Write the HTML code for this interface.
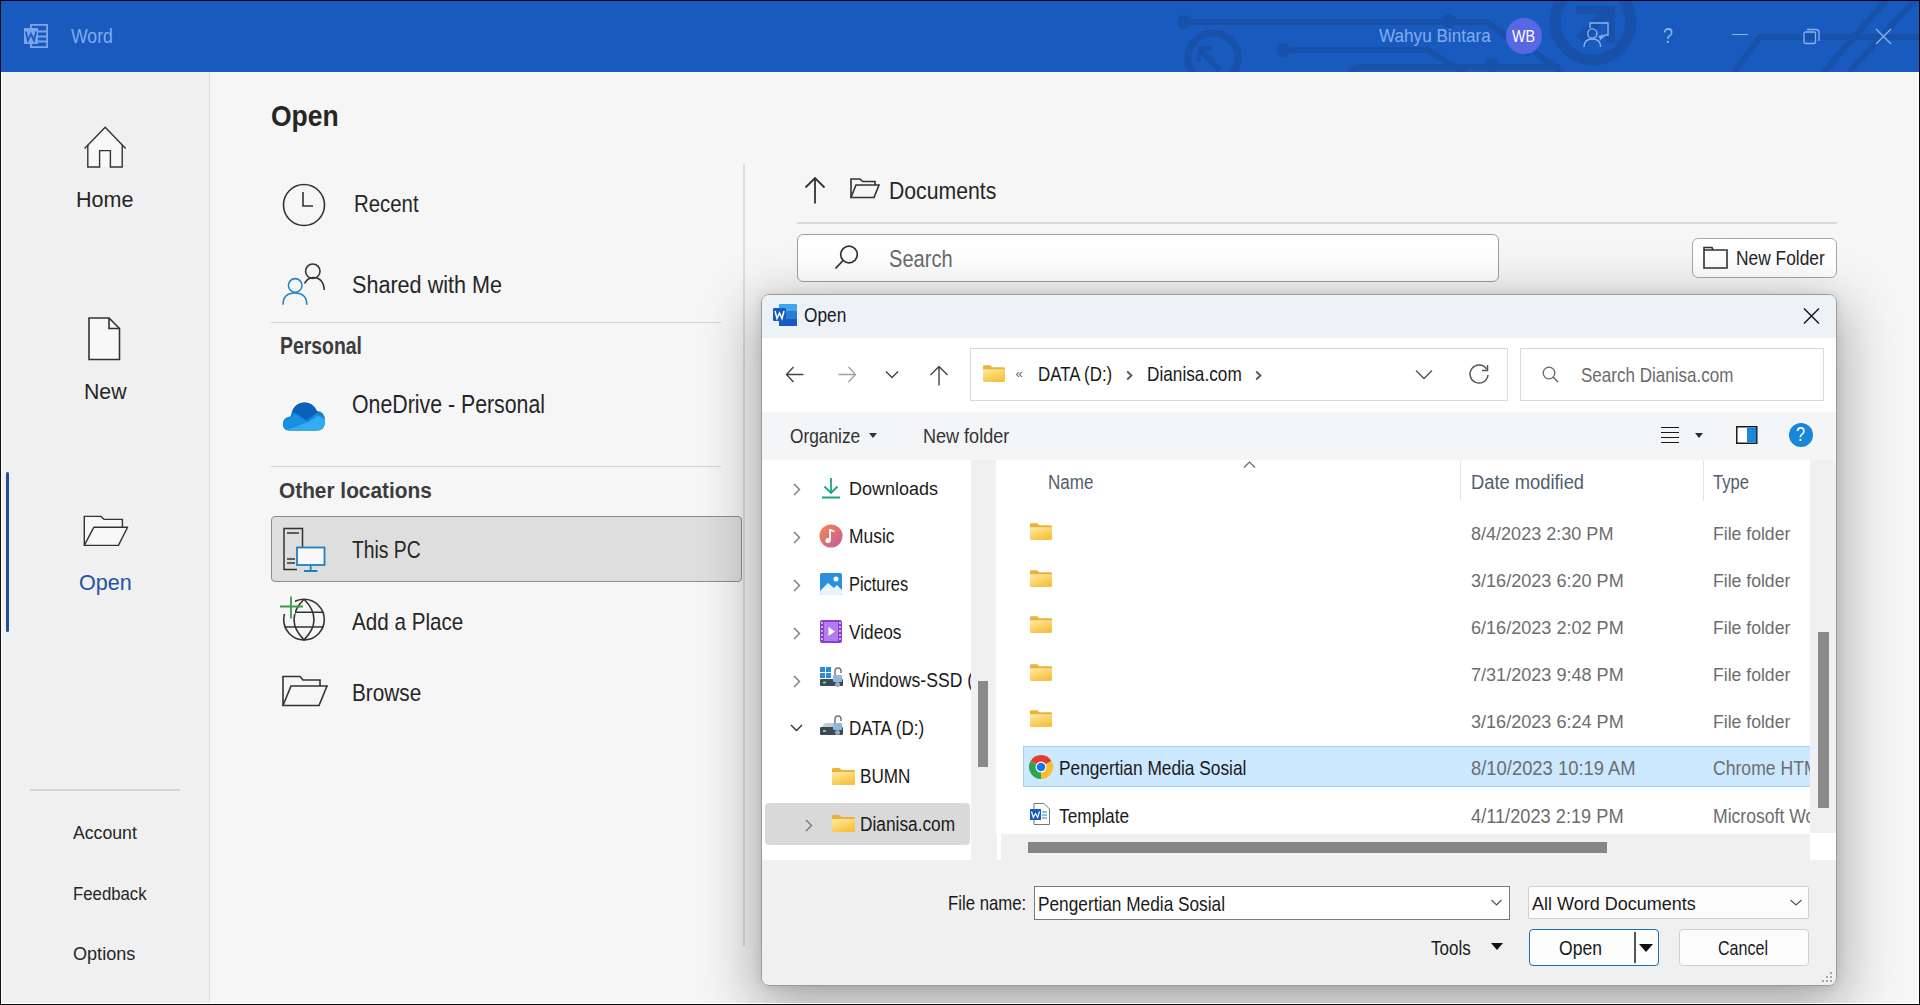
<!DOCTYPE html>
<html><head><meta charset="utf-8">
<style>
*{margin:0;padding:0;box-sizing:border-box}
html,body{width:1920px;height:1005px;overflow:hidden;background:#f6f6f6;font-family:"Liberation Sans",sans-serif;color:#262626;position:relative}
.a{position:absolute}
.t{position:absolute;white-space:nowrap;line-height:1;transform-origin:0 0}
svg.i{position:absolute;overflow:visible}
</style></head><body>
<div class="a" style="left:0;top:0;width:1920px;height:72px;background:#185abd"></div>
<svg class="i" style="left:0;top:0;overflow:hidden" width="1920" height="72" viewBox="0 0 1920 72">
<g fill="none" stroke="#1751aa" stroke-width="6">
<path d="M1184 22 H1487 L1530 54"/>
<circle cx="1184" cy="22" r="4"/>
<circle cx="1449" cy="21" r="4"/>
<circle cx="1213" cy="58" r="25" stroke-width="7"/>
<path d="M1283 50 H1428 L1465 74"/>
<circle cx="1283" cy="50" r="4"/>
<path d="M1348 78 Q1350 67 1366 67 H1560"/>
<circle cx="1491" cy="65" r="4"/>
<path d="M1535 52 L1566 76"/>
<circle cx="1593" cy="22" r="38" stroke-width="11"/>
<path d="M1734 72 L1760 37 H1920"/>
<path d="M1824 72 L1886 0"/>
<path d="M1849 72 L1915 0"/>
</g>
<g fill="#1751aa">
<path d="M1199 46 L1212 46 L1212 51 L1205 51 L1222 68 L1218 72 L1201 55 L1201 62 L1196 62 Z"/>
<path d="M1576 6 L1615 6 L1615 43 L1606 43 L1606 20 L1583 43 L1576 36 L1599 14 L1576 14 Z"/>
</g>
</svg>
<div class="a" style="left:0;top:0;width:1920px;height:1px;background:#00001c"></div>
<svg class="i" style="left:23px;top:23px" width="26" height="26" viewBox="0 0 26 26">
<g fill="none" stroke="#7aa6ec" stroke-width="1.8">
<rect x="7.9" y="1.9" width="16.2" height="22.2"/>
<path d="M15 8.5 H24 M15 13.5 H24 M15 18.5 H24"/>
</g>
<rect x="1" y="5" width="14" height="16" fill="#7aa6ec"/>
<path d="M2.8 8.5 L5 17.5 L8 11 L11 17.5 L13.2 8.5" fill="none" stroke="#1d5cc0" stroke-width="1.8"/>
</svg>
<div class="t" style="left:70.60px;top:27.00px;font-size:19.62px;color:#83acef;transform:scaleX(0.9006);">Word</div>
<div class="t" style="left:1379.40px;top:27.00px;font-size:18.17px;color:#83acef;transform:scaleX(0.9435);">Wahyu Bintara</div>
<div class="a" style="left:1506px;top:18px;width:36px;height:36px;border-radius:50%;background:#5868e4"></div>
<div class="t" style="left:1512.00px;top:29.00px;font-size:15.84px;color:#ffffff;transform:scaleX(0.9011);">WB</div>
<svg class="i" style="left:1583px;top:22px" width="27" height="27" viewBox="0 0 27 27">
<g fill="none" stroke="#8ab3f2" stroke-width="1.4">
<path d="M7 6 V1 H25 V13 H22 L17.5 17 V13.5"/>
<circle cx="9.3" cy="11.5" r="4.6"/>
<path d="M1 25 Q1 17 9.3 17 Q17.6 17 17.6 25"/>
<path d="M16 14 L17.5 16 L19.5 12.5"/>
</g></svg>
<div class="t" style="left:1663.00px;top:25.00px;font-size:22.09px;color:#8ab3f2;transform:scaleX(0.8141);">?</div>
<div class="a" style="left:1732px;top:34px;width:16px;height:1.3px;background:#8ab3f2"></div>
<svg class="i" style="left:1803px;top:28px" width="18" height="17" viewBox="0 0 18 17">
<g fill="none" stroke="#8ab3f2" stroke-width="1.3">
<rect x="1" y="4" width="11.5" height="11.5" rx="1.5"/>
<path d="M4 1.5 H13 Q16 1.5 16 4.5 V13"/>
</g></svg>
<svg class="i" style="left:1875px;top:28px" width="17" height="17" viewBox="0 0 17 17">
<path d="M1 1 L16 16 M16 1 L1 16" stroke="#8ab3f2" stroke-width="1.4"/></svg>
<div class="a" style="left:0;top:72px;width:209px;height:933px;background:#f0f0f0"></div>
<div class="a" style="left:209px;top:72px;width:1px;height:933px;background:#e0e0e0"></div>
<div class="a" style="left:0;top:0;width:1px;height:1005px;background:#111"></div>
<svg class="i" style="left:84px;top:125px" width="43" height="43" viewBox="0 0 43 43">
<path d="M3.8 20 L21.2 2.5 L38.2 20 V42 H3.8 Z" fill="#f8f8f8"/>
<g fill="none" stroke="#333" stroke-width="1.4">
<path d="M0.6 23.6 L21.2 2.2 L41.6 23.6"/>
<path d="M3.8 19.8 V42 H15.6 V25.6 H26.4 V42 H38.2 V19.8"/>
</g>
</svg>
<div class="t" style="left:76.20px;top:188.00px;font-size:22.67px;color:#262626;transform:scaleX(0.9505);">Home</div>
<svg class="i" style="left:88px;top:317px" width="33" height="44" viewBox="0 0 33 44">
<path d="M1 1 H21 L31.5 11.5 V42.5 H1 Z" fill="#f8f8f8" stroke="#333" stroke-width="1.6"/>
<path d="M21 1 V11.5 H31.5" fill="none" stroke="#333" stroke-width="1.6"/>
</svg>
<div class="t" style="left:84.00px;top:381.00px;font-size:22.09px;color:#262626;transform:scaleX(0.9627);">New</div>
<div class="a" style="left:6px;top:472px;width:3px;height:160px;border-radius:2px;background:#1c4f9f"></div>
<svg class="i" style="left:83px;top:514px" width="46" height="33" viewBox="0 0 46 33">
<path d="M1.3 31.4 V2.4 H18 L21 5.4 H39.4 V13.2" fill="#f8f8f8" stroke="#333" stroke-width="1.4"/>
<path d="M1.3 31.4 L10.9 13.2 H44.6 L35.4 31.4 Z" fill="#f8f8f8" stroke="#333" stroke-width="1.4" stroke-linejoin="round"/>
</svg>
<div class="t" style="left:78.60px;top:572.00px;font-size:22.24px;color:#24539f;transform:scaleX(0.9688);">Open</div>
<div class="a" style="left:30px;top:789px;width:150px;height:2px;background:#d4d4d4"></div>
<div class="t" style="left:72.70px;top:824.00px;font-size:18.31px;color:#262626;transform:scaleX(0.9657);">Account</div>
<div class="t" style="left:72.70px;top:885.00px;font-size:18.90px;color:#262626;transform:scaleX(0.8877);">Feedback</div>
<div class="t" style="left:72.70px;top:945.00px;font-size:18.90px;color:#262626;transform:scaleX(0.9568);">Options</div>
<div class="t" style="left:270.70px;top:101.00px;font-size:29.36px;color:#262626;font-weight:700;transform:scaleX(0.9021);">Open</div>
<svg class="i" style="left:282px;top:183px" width="44" height="44" viewBox="0 0 44 44">
<circle cx="22" cy="22" r="20.5" fill="none" stroke="#333" stroke-width="1.6"/>
<path d="M21 9 V23 H31" fill="none" stroke="#333" stroke-width="1.6"/>
</svg>
<div class="t" style="left:354.40px;top:192.00px;font-size:23.84px;color:#262626;transform:scaleX(0.8554);">Recent</div>
<svg class="i" style="left:282px;top:262px" width="44" height="44" viewBox="0 0 44 44">
<g fill="none" stroke-width="1.6">
<circle cx="30.8" cy="9.2" r="7.2" stroke="#333"/>
<path d="M22.5 21.5 Q26 15.5 30.8 15.5 Q41.5 15.5 42.3 28" stroke="#333"/>
<circle cx="13.2" cy="23.4" r="6.8" stroke="#1f86c6"/>
<path d="M1 42.7 Q1 31 12.9 31 Q24.8 31 24.8 42.7" stroke="#1f86c6"/>
</g></svg>
<div class="t" style="left:351.50px;top:273.00px;font-size:24.42px;color:#262626;transform:scaleX(0.8847);">Shared with Me</div>
<div class="a" style="left:271px;top:322px;width:450px;height:1px;background:#d6d6d6"></div>
<div class="t" style="left:280.00px;top:335.00px;font-size:23.26px;color:#3c3c3c;font-weight:700;transform:scaleX(0.8348);">Personal</div>
<svg class="i" style="left:282px;top:400px" width="44" height="32" viewBox="0 0 44 32">
<defs><clipPath id="odc"><path d="M7.5 30.5 Q1 30.5 1 24 Q1 17 8.5 16.5 Q11.5 2.5 22.5 2.5 Q31 2.5 35 11 Q43 11.5 43 21 Q43 30.5 35 30.5 Z"/></clipPath></defs>
<g clip-path="url(#odc)">
<rect x="0" y="0" width="44" height="32" fill="#137bd4"/>
<path d="M8 10 Q15 0 24 1 Q33 3 36 12 L24 20 Z" fill="#0a62b8"/>
<path d="M0 22 L14 14 L26 22 L34 14 L44 18 V32 H0 Z" fill="#1a8ee0"/>
<path d="M0 32 L26 22 L36 16 L44 20 V32 Z" fill="#36acf0"/>
</g></svg>
<div class="t" style="left:351.50px;top:393.00px;font-size:24.85px;color:#262626;transform:scaleX(0.8576);">OneDrive - Personal</div>
<div class="a" style="left:271px;top:466px;width:450px;height:1px;background:#d6d6d6"></div>
<div class="t" style="left:279.30px;top:479.00px;font-size:22.97px;color:#3c3c3c;font-weight:700;transform:scaleX(0.9071);">Other locations</div>
<div class="a" style="left:271px;top:516px;width:471px;height:66px;background:#dedede;border:1px solid #8c8c8c;border-radius:4px"></div>
<svg class="i" style="left:282px;top:527px" width="46" height="46" viewBox="0 0 46 46">
<g fill="none" stroke="#333" stroke-width="1.5">
<path d="M20.5 20 V1.5 H2 V42.5 H15"/>
<path d="M5 6 H17 M5 32 H13 M5 36 H13"/>
</g>
<rect x="15" y="20.5" width="27.5" height="17.5" fill="#f8f8f8" stroke="#1f7fc1" stroke-width="1.8"/>
<path d="M28.7 38.5 V43.5 M22 44 H35.5" stroke="#1f7fc1" stroke-width="1.8"/>
</svg>
<div class="t" style="left:351.50px;top:538.00px;font-size:23.98px;color:#262626;transform:scaleX(0.8056);">This PC</div>
<svg class="i" style="left:280px;top:596px" width="46" height="46" viewBox="0 0 46 46">
<g fill="none" stroke="#333" stroke-width="1.6">
<circle cx="24" cy="23.6" r="20.3"/>
<path d="M24 3.3 Q14 13 14 23.6 Q14 34 24 43.9 Q34 34 34 23.6 Q34 13 24 3.3"/>
<path d="M4.5 16.3 H43.5 M4.5 31 H43.5"/>
</g>
<rect x="0" y="0" width="15" height="18" fill="#f6f6f6"/>
<path d="M11 0.5 V22.5 M0 10.5 H23" stroke="#3a9a48" stroke-width="1.8"/>
</svg>
<div class="t" style="left:351.50px;top:610.00px;font-size:23.84px;color:#262626;transform:scaleX(0.8666);">Add a Place</div>
<svg class="i" style="left:282px;top:675px" width="46" height="32" viewBox="0 0 46 32">
<path d="M1 30.5 V1.5 H18 L21 5 H38 V11" fill="none" stroke="#333" stroke-width="1.6"/>
<path d="M1 30.5 L9 11 H45 L37 30.5 Z" fill="none" stroke="#333" stroke-width="1.6"/>
</svg>
<div class="t" style="left:351.50px;top:681.00px;font-size:23.98px;color:#262626;transform:scaleX(0.8664);">Browse</div>
<div class="a" style="left:743px;top:164px;width:2px;height:782px;background:#dcdcdc"></div>
<svg class="i" style="left:804px;top:176px" width="22" height="28" viewBox="0 0 22 28">
<path d="M11 27.5 V2 M1.5 11.5 L11 2 L20.5 11.5" fill="none" stroke="#333" stroke-width="1.8"/>
</svg>
<svg class="i" style="left:850px;top:178px" width="30" height="21" viewBox="0 0 30 21">
<path d="M1 19.5 V1 H10 L12.5 3.5 H25 V7" fill="none" stroke="#333" stroke-width="1.6"/>
<path d="M1 19.5 L6 7 H29 L24 19.5 Z" fill="none" stroke="#333" stroke-width="1.6"/>
</svg>
<div class="t" style="left:889.30px;top:179.00px;font-size:24.56px;color:#262626;transform:scaleX(0.8644);">Documents</div>
<div class="a" style="left:797px;top:222px;width:1040px;height:2px;background:#d9d9d9"></div>
<div class="a" style="left:797px;top:234px;width:702px;height:48px;background:#fff;border:1px solid #a0a0a0;border-radius:6px"></div>
<svg class="i" style="left:834px;top:245px" width="25" height="25" viewBox="0 0 25 25">
<circle cx="15" cy="9.5" r="8.3" fill="none" stroke="#333" stroke-width="1.7"/>
<path d="M9 15.5 L1.5 23.5" stroke="#333" stroke-width="1.8"/>
</svg>
<div class="t" style="left:888.70px;top:247.00px;font-size:24.13px;color:#6b6b6b;transform:scaleX(0.8321);">Search</div>
<div class="a" style="left:1692px;top:238px;width:145px;height:40px;background:#fff;border:1px solid #a8a8a8;border-radius:6px"></div>
<svg class="i" style="left:1703px;top:246px" width="25" height="23" viewBox="0 0 25 23">
<path d="M1 22 V1.5 H9 L10 4 H24 V22 Z M1 4 H10" fill="none" stroke="#333" stroke-width="1.6"/>
</svg>
<div class="t" style="left:1735.90px;top:249.00px;font-size:19.77px;color:#262626;transform:scaleX(0.8786);">New Folder</div>
<div class="a" style="left:761px;top:294px;width:1076px;height:692px;border-radius:8px;box-shadow:0 16px 56px 6px rgba(0,0,0,0.32), 0 1px 10px rgba(0,0,0,0.10)"></div>
<div class="a" style="left:761px;top:294px;width:1076px;height:692px;border-radius:8px;background:#f0f0f0;border:1.5px solid #9c9c9c;overflow:hidden">
<div class="a" style="left:0;top:0;width:1076px;height:42.5px;background:#edf2f7"></div>
<div class="a" style="left:0;top:42.5px;width:1076px;height:74px;background:#ffffff"></div>
<div class="a" style="left:0;top:116.5px;width:1076px;height:48.5px;background:#f3f5f7"></div>
</div>
<svg class="i" style="left:773px;top:304px" width="24" height="22" viewBox="0 0 24 22">
<rect x="6" y="0" width="18" height="22" rx="1" fill="#41a5ee"/>
<rect x="6" y="7" width="18" height="8" fill="#2b7cd3"/>
<rect x="6" y="15" width="18" height="7" fill="#185abd"/>
<rect x="0" y="4" width="13" height="13" rx="1" fill="#185abd"/>
<path d="M2 7 L4 14.5 L6.5 9 L9 14.5 L11 7" fill="none" stroke="#fff" stroke-width="1.5"/>
</svg>
<div class="t" style="left:803.60px;top:306.00px;font-size:19.77px;color:#1a1a1a;transform:scaleX(0.8748);">Open</div>
<svg class="i" style="left:1803px;top:308px" width="17" height="16" viewBox="0 0 17 16">
<path d="M1 0.5 L16 15.5 M16 0.5 L1 15.5" stroke="#1a1a1a" stroke-width="1.5"/></svg>
<svg class="i" style="left:785px;top:366px" width="19" height="17" viewBox="0 0 19 17">
<path d="M18.5 8.5 H1.5 M8.5 1 L1.5 8.5 L8.5 16" fill="none" stroke="#444" stroke-width="1.4"/></svg>
<svg class="i" style="left:838px;top:366px" width="19" height="17" viewBox="0 0 19 17">
<path d="M0.5 8.5 H17.5 M10.5 1 L17.5 8.5 L10.5 16" fill="none" stroke="#a0a0a0" stroke-width="1.4"/></svg>
<svg class="i" style="left:885px;top:370px" width="14" height="9" viewBox="0 0 14 9">
<path d="M1 1.5 L7 7.5 L13 1.5" fill="none" stroke="#444" stroke-width="1.4"/></svg>
<svg class="i" style="left:929px;top:365px" width="20" height="21" viewBox="0 0 20 21">
<path d="M10 20.5 V1.5 M1.5 10 L10 1.5 L18.5 10" fill="none" stroke="#444" stroke-width="1.4"/></svg>
<div class="a" style="left:970px;top:348px;width:538px;height:53px;background:#fff;border:1px solid #d9d9d9"></div>
<svg class="i" style="left:983px;top:365px" width="22" height="17" viewBox="0 0 23 17">
<defs><linearGradient id="fg983365" x1="0" y1="0" x2="0.6" y2="1"><stop offset="0" stop-color="#ffeaa6"/><stop offset="1" stop-color="#f5c33d"/></linearGradient></defs>
<path d="M0 1.5 Q0 0 1.5 0 H7.5 L9.5 2 H21.5 Q23 2 23 3.5 V15.5 Q23 17 21.5 17 H1.5 Q0 17 0 15.5 Z" fill="#e9b23a"/>
<path d="M0 4 H23 V16 Q23 17 22 17 H1 Q0 17 0 16 Z" fill="url(#fg983365)"/></svg>
<div class="t" style="left:1015.40px;top:367.00px;font-size:13.00px;color:#666;">&laquo;</div>
<div class="t" style="left:1037.90px;top:365.00px;font-size:19.62px;color:#1a1a1a;transform:scaleX(0.8581);">DATA (D:)</div>
<svg class="i" style="left:1126px;top:370px" width="7" height="11" viewBox="0 0 7 11">
<path d="M1.2 1.5 L5.5 5.5 L1.2 9.5" fill="none" stroke="#555" stroke-width="1.8"/></svg>
<div class="t" style="left:1146.70px;top:365.00px;font-size:19.62px;color:#1a1a1a;transform:scaleX(0.8781);">Dianisa.com</div>
<svg class="i" style="left:1255px;top:370px" width="7" height="11" viewBox="0 0 7 11">
<path d="M1.2 1.5 L5.5 5.5 L1.2 9.5" fill="none" stroke="#555" stroke-width="1.8"/></svg>
<svg class="i" style="left:1415px;top:369px" width="18" height="11" viewBox="0 0 18 11">
<path d="M1 1.5 L9 9.5 L17 1.5" fill="none" stroke="#555" stroke-width="1.4"/></svg>
<svg class="i" style="left:1468px;top:364px" width="22" height="21" viewBox="0 0 22 21">
<path d="M18.5 5 A9 9 0 1 0 20 11" fill="none" stroke="#555" stroke-width="1.5"/>
<path d="M19.5 1 V6.5 H14" fill="none" stroke="#555" stroke-width="1.5"/></svg>
<div class="a" style="left:1520px;top:348px;width:304px;height:53px;background:#fff;border:1px solid #d9d9d9"></div>
<svg class="i" style="left:1542px;top:366px" width="17" height="17" viewBox="0 0 17 17">
<circle cx="7" cy="7" r="5.8" fill="none" stroke="#666" stroke-width="1.3"/>
<path d="M11 11 L16 16" stroke="#666" stroke-width="1.4"/></svg>
<div class="t" style="left:1581.20px;top:366.00px;font-size:19.62px;color:#6b6b6b;transform:scaleX(0.8686);">Search Dianisa.com</div>
<div class="t" style="left:790.10px;top:427.00px;font-size:19.62px;color:#333;transform:scaleX(0.8829);">Organize</div>
<div class="a" style="left:868.5px;top:433px;width:0;height:0;border-left:4.5px solid transparent;border-right:4.5px solid transparent;border-top:5.5px solid #333"></div>
<div class="t" style="left:922.60px;top:427.00px;font-size:19.62px;color:#333;transform:scaleX(0.9201);">New folder</div>
<svg class="i" style="left:1660px;top:426px" width="20" height="17" viewBox="0 0 20 17">
<path d="M1 1.5 H19 M1 6.5 H19 M1 11.5 H19 M1 16.5 H19" stroke="#1a1a1a" stroke-width="1.1"/></svg>
<div class="a" style="left:1695px;top:433px;width:0;height:0;border-left:4px solid transparent;border-right:4px solid transparent;border-top:5px solid #2b2b3b"></div>
<svg class="i" style="left:1736px;top:426px" width="22" height="18" viewBox="0 0 22 18">
<rect x="0.75" y="0.75" width="20" height="16.5" fill="#fff" stroke="#1a1a1a" stroke-width="1.5"/>
<rect x="11" y="1.5" width="9.2" height="15" fill="#1e88d8"/></svg>
<div class="a" style="left:1789px;top:423px;width:24px;height:24px;border-radius:50%;background:#1a86d9"></div>
<div class="t" style="left:1796.00px;top:423.00px;font-size:21.08px;color:#fff;transform:scaleX(0.7680);">?</div>
<div class="a" style="left:762px;top:460px;width:209px;height:400px;background:#fff"></div>
<div class="a" style="left:971px;top:460px;width:28px;height:400px;background:#f0f0f0"></div>
<div class="a" style="left:978px;top:681px;width:10px;height:86px;background:#8a8a8a"></div>
<div class="a" style="left:765px;top:803px;width:205px;height:42px;background:#d9d9d9;border-radius:4px"></div>
<svg class="i" style="left:793px;top:483px" width="8" height="13" viewBox="0 0 8 13"><path d="M1 1 L6.5 6.5 L1 12" fill="none" stroke="#777" stroke-width="1.4"/></svg>
<svg class="i" style="left:793px;top:531px" width="8" height="13" viewBox="0 0 8 13"><path d="M1 1 L6.5 6.5 L1 12" fill="none" stroke="#777" stroke-width="1.4"/></svg>
<svg class="i" style="left:793px;top:579px" width="8" height="13" viewBox="0 0 8 13"><path d="M1 1 L6.5 6.5 L1 12" fill="none" stroke="#777" stroke-width="1.4"/></svg>
<svg class="i" style="left:793px;top:627px" width="8" height="13" viewBox="0 0 8 13"><path d="M1 1 L6.5 6.5 L1 12" fill="none" stroke="#777" stroke-width="1.4"/></svg>
<svg class="i" style="left:793px;top:675px" width="8" height="13" viewBox="0 0 8 13"><path d="M1 1 L6.5 6.5 L1 12" fill="none" stroke="#777" stroke-width="1.4"/></svg>
<svg class="i" style="left:805px;top:819px" width="8" height="13" viewBox="0 0 8 13"><path d="M1 1 L6.5 6.5 L1 12" fill="none" stroke="#777" stroke-width="1.4"/></svg>
<svg class="i" style="left:790px;top:724px" width="13" height="8" viewBox="0 0 13 8"><path d="M1 1 L6.5 6.5 L12 1" fill="none" stroke="#333" stroke-width="1.4"/></svg>
<svg class="i" style="left:821px;top:477px" width="20" height="22" viewBox="0 0 20 22">
<path d="M10 1 V16 M3.5 9.5 L10 16 L16.5 9.5 M1 20.5 H19" fill="none" stroke="#1ba38a" stroke-width="1.8"/></svg>
<div class="t" style="left:848.80px;top:479.00px;font-size:19.19px;color:#1a1a1a;transform:scaleX(0.9366);">Downloads</div>
<svg class="i" style="left:819px;top:524px" width="24" height="24" viewBox="0 0 24 24">
<defs><linearGradient id="mg" x1="0" y1="0" x2="1" y2="1"><stop offset="0" stop-color="#f28a4e"/><stop offset="1" stop-color="#c35aa0"/></linearGradient></defs>
<circle cx="12" cy="12" r="11.5" fill="url(#mg)"/>
<path d="M11 16.5 V6 L15.5 7.5" fill="none" stroke="#fff" stroke-width="1.8"/>
<circle cx="9" cy="16.5" r="2.5" fill="#fff"/></svg>
<div class="t" style="left:848.80px;top:527.00px;font-size:19.77px;color:#1a1a1a;transform:scaleX(0.8816);">Music</div>
<svg class="i" style="left:820px;top:573px" width="22" height="22" viewBox="0 0 22 22">
<rect x="0" y="0" width="22" height="22" rx="2" fill="#2b8fe0"/>
<path d="M0 18 L8 10 L14 15 L17 12 L22 17 V20 Q22 22 20 22 H2 Q0 22 0 20 Z" fill="#e7f3ff"/>
<circle cx="16" cy="6" r="2.5" fill="#fff"/></svg>
<div class="t" style="left:848.80px;top:574.00px;font-size:20.20px;color:#1a1a1a;transform:scaleX(0.8112);">Pictures</div>
<svg class="i" style="left:820px;top:620px" width="22" height="23" viewBox="0 0 22 23">
<rect x="0" y="0" width="22" height="23" rx="2" fill="#8a3fd0"/>
<rect x="4" y="2" width="14" height="19" fill="#b47cf0"/>
<path d="M1 3 H3 M1 7 H3 M1 11 H3 M1 15 H3 M1 19 H3 M19 3 H21 M19 7 H21 M19 11 H21 M19 15 H21 M19 19 H21" stroke="#ddd" stroke-width="1.5"/>
<path d="M8.5 7 L15 11.5 L8.5 16 Z" fill="#fff"/></svg>
<div class="t" style="left:848.80px;top:622.00px;font-size:20.06px;color:#1a1a1a;transform:scaleX(0.8610);">Videos</div>
<svg class="i" style="left:820px;top:667px" width="23" height="20" viewBox="0 0 23 20">
<rect x="0" y="0" width="5" height="5" fill="#2a8ae0"/><rect x="6" y="0" width="5" height="5" fill="#2a8ae0"/>
<rect x="0" y="6" width="5" height="5" fill="#2a8ae0"/><rect x="6" y="6" width="5" height="5" fill="#2a8ae0"/>
<path d="M15 9 V4 Q15 1 18 1 Q21 1 21 4 V6" fill="none" stroke="#777" stroke-width="1.5"/>
<rect x="0" y="12" width="23" height="7" rx="1" fill="#3c4a57"/>
<rect x="13" y="8" width="9" height="7" rx="1" fill="#8cb8e0"/><circle cx="17.5" cy="17.5" r="2.5" fill="#9aa8b4"/>
<rect x="3" y="14.5" width="3" height="2" fill="#7fd16f"/></svg>
<div class="t" style="left:848.80px;top:671.00px;font-size:19.91px;color:#1a1a1a;transform:scaleX(0.8838);">Windows-SSD (</div>
<div class="a" style="left:971px;top:665px;width:6px;height:30px;background:#f0f0f0"></div>
<svg class="i" style="left:820px;top:715px" width="23" height="21" viewBox="0 0 23 21">
<path d="M15 9 V4 Q15 1 18 1 Q21 1 21 4 V6" fill="none" stroke="#777" stroke-width="1.5"/>
<path d="M2 12 L5 8 H18 L21 12 Z" fill="#c8ccd0"/>
<rect x="0" y="12" width="23" height="8" rx="1" fill="#3c4a57"/>
<rect x="13" y="8" width="9" height="7" rx="1" fill="#8cb8e0"/><circle cx="17.5" cy="17.5" r="2.5" fill="#9aa8b4"/>
<rect x="3" y="15" width="3" height="2" fill="#7fd16f"/></svg>
<div class="t" style="left:848.80px;top:719.00px;font-size:19.91px;color:#1a1a1a;transform:scaleX(0.8569);">DATA (D:)</div>
<svg class="i" style="left:832px;top:768px" width="23" height="17" viewBox="0 0 23 17">
<defs><linearGradient id="fg832768" x1="0" y1="0" x2="0.6" y2="1"><stop offset="0" stop-color="#ffeaa6"/><stop offset="1" stop-color="#f5c33d"/></linearGradient></defs>
<path d="M0 1.5 Q0 0 1.5 0 H7.5 L9.5 2 H21.5 Q23 2 23 3.5 V15.5 Q23 17 21.5 17 H1.5 Q0 17 0 15.5 Z" fill="#e9b23a"/>
<path d="M0 4 H23 V16 Q23 17 22 17 H1 Q0 17 0 16 Z" fill="url(#fg832768)"/></svg>
<div class="t" style="left:860.40px;top:766.00px;font-size:20.35px;color:#1a1a1a;transform:scaleX(0.8413);">BUMN</div>
<svg class="i" style="left:832px;top:815px" width="23" height="17" viewBox="0 0 23 17">
<defs><linearGradient id="fg832815" x1="0" y1="0" x2="0.6" y2="1"><stop offset="0" stop-color="#ffeaa6"/><stop offset="1" stop-color="#f5c33d"/></linearGradient></defs>
<path d="M0 1.5 Q0 0 1.5 0 H7.5 L9.5 2 H21.5 Q23 2 23 3.5 V15.5 Q23 17 21.5 17 H1.5 Q0 17 0 15.5 Z" fill="#e9b23a"/>
<path d="M0 4 H23 V16 Q23 17 22 17 H1 Q0 17 0 16 Z" fill="url(#fg832815)"/></svg>
<div class="t" style="left:860.40px;top:814.00px;font-size:20.35px;color:#1a1a1a;transform:scaleX(0.8494);">Dianisa.com</div>
<div class="a" style="left:996px;top:460px;width:814px;height:374px;background:#fff"></div>
<div class="a" style="left:1810px;top:460px;width:26px;height:373px;background:#f0f0f0"></div>
<div class="a" style="left:1818px;top:632px;width:11px;height:176px;background:#8a8a8a"></div>
<div class="a" style="left:1810px;top:833px;width:26px;height:27px;background:#fff"></div>
<div class="a" style="left:997px;top:834px;width:4px;height:26px;background:#fff"></div>
<div class="a" style="left:1001px;top:834px;width:809px;height:26px;background:#f0f0f0"></div>
<div class="a" style="left:1028px;top:842px;width:579px;height:11px;background:#858585"></div>
<svg class="i" style="left:1243px;top:461px" width="13" height="7" viewBox="0 0 13 7"><path d="M1 6.5 L6.5 1 L12 6.5" fill="none" stroke="#666" stroke-width="1.2"/></svg>
<div class="t" style="left:1047.80px;top:473.00px;font-size:19.91px;color:#505e6d;transform:scaleX(0.8546);">Name</div>
<div class="a" style="left:1460px;top:461px;width:1px;height:40px;background:#e5e5e5"></div>
<div class="t" style="left:1470.50px;top:473.00px;font-size:19.91px;color:#505e6d;transform:scaleX(0.9205);">Date modified</div>
<div class="a" style="left:1703px;top:461px;width:1px;height:40px;background:#e5e5e5"></div>
<div class="t" style="left:1713.20px;top:473.00px;font-size:19.91px;color:#505e6d;transform:scaleX(0.8339);">Type</div>
<div class="a" style="left:1023px;top:746px;width:787px;height:41px;background:#cce8ff;border:1px solid #99d1ff;border-right:none"></div>
<svg class="i" style="left:1030px;top:523px" width="22" height="17" viewBox="0 0 23 17">
<defs><linearGradient id="fg1030523" x1="0" y1="0" x2="0.6" y2="1"><stop offset="0" stop-color="#ffeaa6"/><stop offset="1" stop-color="#f5c33d"/></linearGradient></defs>
<path d="M0 1.5 Q0 0 1.5 0 H7.5 L9.5 2 H21.5 Q23 2 23 3.5 V15.5 Q23 17 21.5 17 H1.5 Q0 17 0 15.5 Z" fill="#e9b23a"/>
<path d="M0 4 H23 V16 Q23 17 22 17 H1 Q0 17 0 16 Z" fill="url(#fg1030523)"/></svg>
<div class="t" style="left:1470.50px;top:524.00px;font-size:19.19px;color:#6d6d6d;transform:scaleX(0.9401);">8/4/2023 2:30 PM</div>
<div class="t" style="left:1713.20px;top:524.00px;font-size:19.19px;color:#6d6d6d;transform:scaleX(0.9176);">File folder</div>
<svg class="i" style="left:1030px;top:570px" width="22" height="17" viewBox="0 0 23 17">
<defs><linearGradient id="fg1030570" x1="0" y1="0" x2="0.6" y2="1"><stop offset="0" stop-color="#ffeaa6"/><stop offset="1" stop-color="#f5c33d"/></linearGradient></defs>
<path d="M0 1.5 Q0 0 1.5 0 H7.5 L9.5 2 H21.5 Q23 2 23 3.5 V15.5 Q23 17 21.5 17 H1.5 Q0 17 0 15.5 Z" fill="#e9b23a"/>
<path d="M0 4 H23 V16 Q23 17 22 17 H1 Q0 17 0 16 Z" fill="url(#fg1030570)"/></svg>
<div class="t" style="left:1470.50px;top:571.00px;font-size:19.19px;color:#6d6d6d;transform:scaleX(0.9418);">3/16/2023 6:20 PM</div>
<div class="t" style="left:1713.20px;top:571.00px;font-size:19.19px;color:#6d6d6d;transform:scaleX(0.9176);">File folder</div>
<svg class="i" style="left:1030px;top:616px" width="22" height="17" viewBox="0 0 23 17">
<defs><linearGradient id="fg1030616" x1="0" y1="0" x2="0.6" y2="1"><stop offset="0" stop-color="#ffeaa6"/><stop offset="1" stop-color="#f5c33d"/></linearGradient></defs>
<path d="M0 1.5 Q0 0 1.5 0 H7.5 L9.5 2 H21.5 Q23 2 23 3.5 V15.5 Q23 17 21.5 17 H1.5 Q0 17 0 15.5 Z" fill="#e9b23a"/>
<path d="M0 4 H23 V16 Q23 17 22 17 H1 Q0 17 0 16 Z" fill="url(#fg1030616)"/></svg>
<div class="t" style="left:1470.50px;top:618.00px;font-size:19.19px;color:#6d6d6d;transform:scaleX(0.9418);">6/16/2023 2:02 PM</div>
<div class="t" style="left:1713.20px;top:618.00px;font-size:19.19px;color:#6d6d6d;transform:scaleX(0.9176);">File folder</div>
<svg class="i" style="left:1030px;top:664px" width="22" height="17" viewBox="0 0 23 17">
<defs><linearGradient id="fg1030664" x1="0" y1="0" x2="0.6" y2="1"><stop offset="0" stop-color="#ffeaa6"/><stop offset="1" stop-color="#f5c33d"/></linearGradient></defs>
<path d="M0 1.5 Q0 0 1.5 0 H7.5 L9.5 2 H21.5 Q23 2 23 3.5 V15.5 Q23 17 21.5 17 H1.5 Q0 17 0 15.5 Z" fill="#e9b23a"/>
<path d="M0 4 H23 V16 Q23 17 22 17 H1 Q0 17 0 16 Z" fill="url(#fg1030664)"/></svg>
<div class="t" style="left:1470.50px;top:665.00px;font-size:19.19px;color:#6d6d6d;transform:scaleX(0.9418);">7/31/2023 9:48 PM</div>
<div class="t" style="left:1713.20px;top:665.00px;font-size:19.19px;color:#6d6d6d;transform:scaleX(0.9176);">File folder</div>
<svg class="i" style="left:1030px;top:710px" width="22" height="17" viewBox="0 0 23 17">
<defs><linearGradient id="fg1030710" x1="0" y1="0" x2="0.6" y2="1"><stop offset="0" stop-color="#ffeaa6"/><stop offset="1" stop-color="#f5c33d"/></linearGradient></defs>
<path d="M0 1.5 Q0 0 1.5 0 H7.5 L9.5 2 H21.5 Q23 2 23 3.5 V15.5 Q23 17 21.5 17 H1.5 Q0 17 0 15.5 Z" fill="#e9b23a"/>
<path d="M0 4 H23 V16 Q23 17 22 17 H1 Q0 17 0 16 Z" fill="url(#fg1030710)"/></svg>
<div class="t" style="left:1470.50px;top:712.00px;font-size:19.19px;color:#6d6d6d;transform:scaleX(0.9418);">3/16/2023 6:24 PM</div>
<div class="t" style="left:1713.20px;top:712.00px;font-size:19.19px;color:#6d6d6d;transform:scaleX(0.9176);">File folder</div>
<svg class="i" style="left:1029px;top:755px" width="24" height="24" viewBox="0 0 24 24">
<path d="M12 12 L22.4 6 A12 12 0 0 0 1.6 6 Z" fill="#e33b2e"/>
<path d="M12 12 L1.6 6 A12 12 0 0 0 12 24 Z" fill="#2ea44f"/>
<path d="M12 12 L12 24 A12 12 0 0 0 22.4 6 Z" fill="#f6c02d"/>
<circle cx="12" cy="12" r="5.5" fill="#fff"/><circle cx="12" cy="12" r="4.3" fill="#1a73e8"/></svg>
<div class="t" style="left:1059.40px;top:758.00px;font-size:20.93px;color:#1a1a1a;transform:scaleX(0.8260);">Pengertian Media Sosial</div>
<div class="t" style="left:1470.50px;top:758.00px;font-size:20.93px;color:#6d6d6d;transform:scaleX(0.8790);">8/10/2023 10:19 AM</div>
<div class="a" style="left:1700px;top:740px;width:110px;height:93px;overflow:hidden">
<div class="t" style="left:13.20px;top:18.00px;font-size:20.93px;color:#6d6d6d;transform:scaleX(0.8412);">Chrome HTML Document</div>
<div class="t" style="left:13.20px;top:66.00px;font-size:20.49px;color:#6d6d6d;transform:scaleX(0.8590);">Microsoft Word Document</div>
</div>
<svg class="i" style="left:1030px;top:803px" width="20" height="22" viewBox="0 0 20 22">
<path d="M4 0.5 H14 L19.5 6 V21.5 H4 Z" fill="#fff" stroke="#777" stroke-width="1"/>
<path d="M12 9 H17 M12 12 H17 M12 15 H17" stroke="#2b7cd3" stroke-width="1.2"/>
<rect x="0" y="6" width="11" height="11" fill="#185abd"/>
<path d="M1.5 8.5 L3.3 14.5 L5.5 10.5 L7.7 14.5 L9.5 8.5" fill="none" stroke="#fff" stroke-width="1.2"/></svg>
<div class="t" style="left:1059.40px;top:806.00px;font-size:20.49px;color:#1a1a1a;transform:scaleX(0.8441);">Template</div>
<div class="t" style="left:1470.50px;top:806.00px;font-size:20.49px;color:#6d6d6d;transform:scaleX(0.8894);">4/11/2023 2:19 PM</div>
<div class="t" style="left:947.60px;top:894.00px;font-size:19.48px;color:#1a1a1a;transform:scaleX(0.8601);">File name:</div>
<div class="a" style="left:1034px;top:886px;width:476px;height:34px;background:#fff;border:1px solid #7a7a7a"></div>
<div class="t" style="left:1038.40px;top:894.00px;font-size:20.49px;color:#1a1a1a;transform:scaleX(0.8422);">Pengertian Media Sosial</div>
<svg class="i" style="left:1491px;top:899px" width="11" height="7" viewBox="0 0 11 7"><path d="M0.5 1 L5.5 6 L10.5 1" fill="none" stroke="#555" stroke-width="1.2"/></svg>
<div class="a" style="left:1528px;top:886px;width:281px;height:33px;background:#fdfdfd;border:1px solid #d0d0d0;border-radius:2px"></div>
<div class="t" style="left:1532.30px;top:895.00px;font-size:18.75px;color:#1a1a1a;transform:scaleX(0.9598);">All Word Documents</div>
<svg class="i" style="left:1790px;top:899px" width="12" height="7" viewBox="0 0 12 7"><path d="M0.5 1 L6 6 L11.5 1" fill="none" stroke="#555" stroke-width="1.2"/></svg>
<div class="t" style="left:1431.30px;top:939.00px;font-size:19.48px;color:#1a1a1a;transform:scaleX(0.8733);">Tools</div>
<div class="a" style="left:1491px;top:943px;width:0;height:0;border-left:6px solid transparent;border-right:6px solid transparent;border-top:7px solid #111"></div>
<div class="a" style="left:1529px;top:929px;width:130px;height:37px;background:#fdfdfd;border:1.3px solid #1a6fb5;border-radius:4px"></div>
<div class="t" style="left:1559.30px;top:939.00px;font-size:19.48px;color:#1a1a1a;transform:scaleX(0.9026);">Open</div>
<div class="a" style="left:1634px;top:932px;width:1.5px;height:31px;background:#555"></div>
<div class="a" style="left:1639px;top:944px;width:0;height:0;border-left:7.5px solid transparent;border-right:7.5px solid transparent;border-top:8px solid #111"></div>
<div class="a" style="left:1679px;top:929px;width:130px;height:37px;background:#fdfdfd;border:1px solid #d0d0d0;border-radius:4px"></div>
<div class="t" style="left:1718.20px;top:939.00px;font-size:19.48px;color:#1a1a1a;transform:scaleX(0.8263);">Cancel</div>
<div class="a" style="left:1830px;top:972px;width:2px;height:2px;background:#a8a8a8"></div>
<div class="a" style="left:1826px;top:976px;width:2px;height:2px;background:#a8a8a8"></div>
<div class="a" style="left:1830px;top:976px;width:2px;height:2px;background:#a8a8a8"></div>
<div class="a" style="left:1822px;top:980px;width:2px;height:2px;background:#a8a8a8"></div>
<div class="a" style="left:1826px;top:980px;width:2px;height:2px;background:#a8a8a8"></div>
<div class="a" style="left:1830px;top:980px;width:2px;height:2px;background:#a8a8a8"></div>
<div class="a" style="left:1918px;top:72px;width:1px;height:932px;background:#fff"></div>
<div class="a" style="left:1px;top:1003px;width:1918px;height:1px;background:#fff"></div>
<div class="a" style="left:1px;top:72px;width:1px;height:932px;background:#fafafa"></div>
<div class="a" style="left:1919px;top:0;width:1px;height:1005px;background:#0a0a0a"></div>
<div class="a" style="left:0;top:1004px;width:1920px;height:1px;background:#0a0a0a"></div>
</body></html>
